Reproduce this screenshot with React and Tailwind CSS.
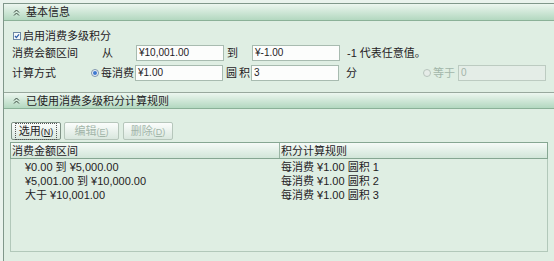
import React from 'react'

const Chevrons = () => (
  <svg width="7" height="7" viewBox="0 0 7 7" className="shrink-0">
    <path d="M1 3.5 L3.5 1 L6 3.5 M1 6.5 L3.5 4 L6 6.5" fill="none" stroke="#3a4a40" strokeWidth="1" />
  </svg>
)

const Checkbox = () => (
  <svg width="8" height="8" viewBox="0 0 8 8" className="shrink-0">
    <rect x="0.5" y="0.5" width="7" height="7" fill="#f4f8fb" stroke="#6b86a3" />
    <path d="M2 4 L3.4 5.6 L6 2.3" fill="none" stroke="#2f5fa8" strokeWidth="1.3" />
  </svg>
)

const Radio = ({ on, disabled }) => (
  <svg width="8" height="8" viewBox="0 0 8 8" className="shrink-0">
    <circle cx="4" cy="4" r="3.5" fill={disabled ? '#e6ece8' : '#eef3f8'} stroke={disabled ? '#b7c4bc' : '#7d93ab'} />
    {on && <circle cx="4" cy="4" r="2" fill="#3d78cf" />}
  </svg>
)

const Input = ({ value, disabled, className = '' }) => (
  <div
    className={`h-[16px] border px-[2px] flex items-center shrink-0 text-[10px] ${
      disabled ? 'bg-[#e4ede7] border-[#bccbc1] text-[#a3b4a9]' : 'bg-[#fcfdfc] border-[#a8bbb0]'
    } ${className}`}
  >
    {value}
  </div>
)

const SectionHeader = ({ title, top }) => (
  <div
    className={`h-[17px] flex items-center gap-[6px] pl-[9px] border-b border-[#8bb198] bg-linear-to-b from-[#ecf6ef] to-[#b3d8c0] ${
      top ? 'border-t border-t-[#98a89d]' : ''
    }`}
  >
    <Chevrons />
    <span className="whitespace-nowrap">{title}</span>
  </div>
)

const Button = ({ label, hotkey, disabled, focused, className = '' }) => (
  <div
    className={`h-[18px] rounded-[2px] border flex items-center justify-center bg-linear-to-b from-[#fbfdfc] to-[#d9e7de] ${
      disabled ? 'border-[#b6c6bb] text-[#a2b5a9]' : 'border-[#7f9286]'
    } ${className}`}
  >
    <span className={`px-[3px] flex items-baseline whitespace-nowrap ${focused ? 'outline-1 outline-dotted outline-[#555]' : ''}`}>
      {label}
      <span className="text-[9px]">
        (<span className="underline">{hotkey}</span>)
      </span>
    </span>
  </div>
)

const rules = [
  { range: '¥0.00 到 ¥5,000.00', rule: '每消费 ¥1.00 圆积 1' },
  { range: '¥5,001.00 到 ¥10,000.00', rule: '每消费 ¥1.00 圆积 2' },
  { range: '大于 ¥10,001.00', rule: '每消费 ¥1.00 圆积 3' },
]

export default function App() {
  return (
    <div className="w-[554px] h-[261px] overflow-hidden bg-[#eaf3ed] pt-[3px] pl-[3px] text-[11px] leading-[14px] text-[#1f221f] font-['Liberation_Sans','Noto_Sans_CJK_SC',sans-serif]">
      <div className="h-full border-l border-t border-[#80978a] bg-[#dfeee3]">
        {/* 基本信息 */}
        <SectionHeader title="基本信息" />
        <div className="h-[71px] pl-[8px] pt-[8px] whitespace-nowrap">
          <div className="h-[14px] flex items-center gap-[2px] pl-[1px]">
            <Checkbox />
            <span>启用消费多级积分</span>
          </div>
          <div className="mt-[2px] h-[16px] flex items-center">
            <span className="w-[90px] shrink-0">消费会额区间</span>
            <span className="w-[34px] shrink-0">从</span>
            <Input value="¥10,001.00" className="w-[88px]" />
            <span className="w-[28px] shrink-0 pl-[3px]">到</span>
            <Input value="¥-1.00" className="w-[88px]" />
            <span className="pl-[7px]">-1 代表任意值。</span>
          </div>
          <div className="mt-[4px] h-[16px] flex items-center">
            <span className="w-[79px] shrink-0">计算方式</span>
            <Radio on />
            <span className="w-[36px] shrink-0 pl-[2px]">每消费</span>
            <Input value="¥1.00" className="w-[88px]" />
            <span className="w-[28px] shrink-0 pl-[3px] flex gap-[2px]">
              <span>圆</span>
              <span>积</span>
            </span>
            <Input value="3" className="w-[88px]" />
            <span className="w-[84px] shrink-0 pl-[7px]">分</span>
            <Radio disabled />
            <span className="w-[27px] shrink-0 pl-[2px] text-[#a2b6a9]">等于</span>
            <Input value="0" disabled className="w-[88px]" />
          </div>
        </div>

        {/* 已使用消费多级积分计算规则 */}
        <SectionHeader title="已使用消费多级积分计算规则" top />
        <div className="pt-[13px] pl-[6px] whitespace-nowrap">
          <div className="flex items-center pl-[1px]">
            <Button label="选用" hotkey="N" focused className="w-[50px]" />
            <Button label="编辑" hotkey="E" disabled className="w-[55px] ml-[3px]" />
            <Button label="删除" hotkey="D" disabled className="w-[50px] ml-[4px]" />
          </div>
          <div className="mt-[2px] w-[538px] h-[110px] border-x border-b border-[#b2c8ba]">
            <div className="-mx-[1px] h-[17px] grid grid-cols-[268px_1fr] border border-[#86a692] bg-linear-to-b from-[#f5faf7] to-[#d2e6d9]">
              <div className="pl-[1px] flex items-center">消费金额区间</div>
              <div className="pl-[1px] flex items-center border-l border-[#9ab5a4]">积分计算规则</div>
            </div>
            <div className="pt-[1px]">
              {rules.map((r) => (
                <div key={r.range} className="h-[14px] grid grid-cols-[268px_1fr] items-center">
                  <div className="pl-[14px]">{r.range}</div>
                  <div className="pl-[2px]">{r.rule}</div>
                </div>
              ))}
            </div>
          </div>
        </div>
      </div>
    </div>
  )
}
